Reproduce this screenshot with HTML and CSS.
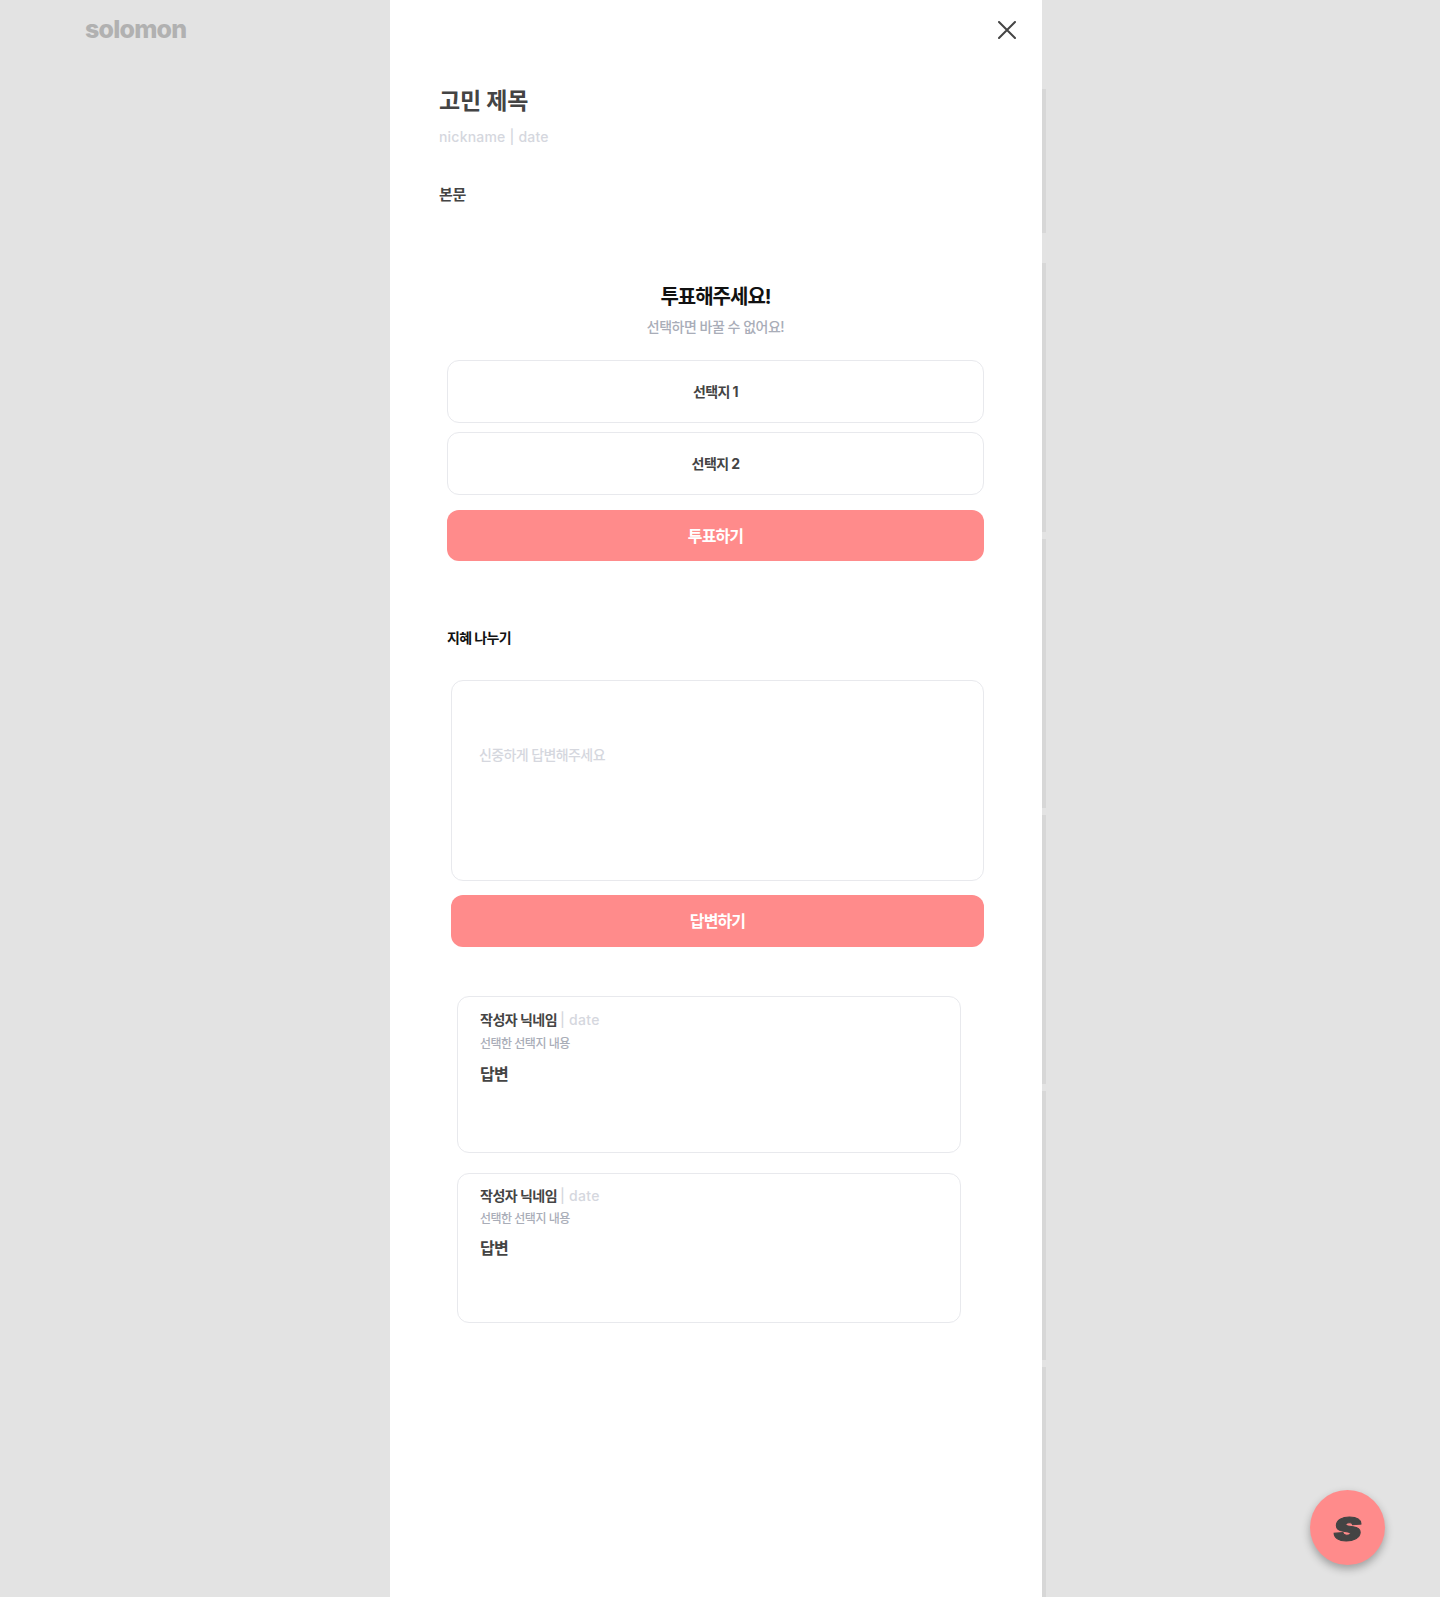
FILE: index.html
```html
<!DOCTYPE html>
<html lang="ko">
<head>
    <meta charset="UTF-8">
    <meta name="viewport" content="width=device-width, initial-scale=1.0">
    <title>Solomon</title>
    <link rel="stylesheet" href="styles.css">
</head>
<body>
    <div class="page">
        <header class="side">
            <span class="logo">solomon</span>
        </header>

        <main class="modal">
            <button class="close" type="button" aria-label="close">
                <svg width="18" height="18" viewBox="0 0 18 18">
                    <path d="M1 1L17 17M17 1L1 17" stroke="#444" stroke-width="2" stroke-linecap="round" fill="none"/>
                </svg>
            </button>

            <section class="post">
                <h1>고민 제목</h1>
                <p class="meta">nickname | date</p>
                <p class="body-text">본문</p>
            </section>

            <section class="vote">
                <h2>투표해주세요!</h2>
                <p class="vote-note">선택하면 바꿀 수 없어요!</p>
                <div class="option">선택지 1</div>
                <div class="option">선택지 2</div>
                <button class="btn" type="button">투표하기</button>
            </section>

            <section class="share">
                <h3>지혜 나누기</h3>
                <div class="answer-form">
                    <div class="answer-input">신중하게 답변해주세요</div>
                    <button class="btn" type="button">답변하기</button>
                </div>
            </section>

            <section class="answers">
                <article class="answer answer-first">
                    <p class="writer">작성자 닉네임 <span>| date</span></p>
                    <p class="picked">선택한 선택지 내용</p>
                    <p class="reply">답변</p>
                </article>
                <article class="answer answer-second">
                    <p class="writer">작성자 닉네임 <span>| date</span></p>
                    <p class="picked">선택한 선택지 내용</p>
                    <p class="reply">답변</p>
                </article>
            </section>
        </main>

        <!-- edges of the cards behind the modal -->
        <div class="edges">
            <div class="edge edge-short"></div>
            <div class="edge"></div>
            <div class="edge"></div>
            <div class="edge"></div>
            <div class="edge"></div>
            <div class="edge edge-last"></div>
        </div>
    </div>

    <button class="fab" type="button" aria-label="solomon"><span>s</span></button>
</body>
</html>
```

FILE: styles.css
```css
* {
    margin: 0;
    padding: 0;
    box-sizing: border-box;
    font-family: 'Inter', 'Noto Sans CJK KR', sans-serif;
}
body {
    height: 1597px;
    overflow: hidden;
    background: #e3e3e3;
}
button {
    border: none;
    background: none;
    cursor: pointer;
}
.page {
    display: grid;
    grid-template-columns: 390px 652px 1fr;
    height: 1597px;
}
.side {
    padding: 13px 0 0 85px;
}
.logo {
    display: block;
    font-size: 25px;
    line-height: 32px;
    font-weight: 800;
    letter-spacing: -0.8px;
    color: #b1b1b1;
}
.modal {
    position: relative;
    background: #fff;
    padding: 0 58px 0 49px;
}
.close {
    position: absolute;
    top: 21px;
    left: 608px;
    display: flex;
}
.post {
    padding-top: 85px;
}
.post h1 {
    font-size: 23px;
    line-height: 32px;
    font-weight: 700;
    letter-spacing: -0.2px;
    color: #444;
}
.meta {
    margin-top: 10px;
    font-size: 14px;
    line-height: 20px;
    font-weight: 500;
    letter-spacing: 0.2px;
    color: #d5d7de;
}
.body-text {
    margin-top: 38px;
    font-size: 15px;
    line-height: 20px;
    font-weight: 700;
    letter-spacing: -0.3px;
    color: #444;
}
.vote {
    margin: 78px 0 0 8px;
    text-align: center;
}
.vote h2 {
    font-size: 20px;
    line-height: 28px;
    font-weight: 700;
    letter-spacing: -1px;
    color: #111;
}
.vote-note {
    margin-top: 6px;
    font-size: 14px;
    line-height: 20px;
    font-weight: 500;
    letter-spacing: -0.5px;
    color: #a9adb8;
}
.option {
    height: 63px;
    line-height: 61px;
    margin-top: 9px;
    border: 1px solid #e8e9ed;
    border-radius: 12px;
    font-size: 14px;
    font-weight: 700;
    letter-spacing: -0.6px;
    color: #444;
}
.vote-note + .option {
    margin-top: 23px;
}
.btn {
    display: block;
    width: 100%;
    height: 51px;
    padding-bottom: 2px;
    border-radius: 12px;
    background: #ff8b8b;
    color: #fff;
    font-size: 16px;
    font-weight: 700;
    letter-spacing: -0.9px;
}
.vote .btn {
    margin-top: 15px;
}
.share {
    margin: 67px 0 0 8px;
}
.share h3 {
    font-size: 14px;
    line-height: 20px;
    font-weight: 700;
    letter-spacing: -0.6px;
    color: #111;
}
.answer-form {
    margin: 32px 0 0 4px;
}
.answer-input {
    height: 201px;
    padding: 64px 0 0 27px;
    border: 1px solid #e8e9ed;
    border-radius: 12px;
    font-size: 14px;
    line-height: 20px;
    font-weight: 500;
    letter-spacing: -0.6px;
    color: #d5d7de;
}
.answer-form .btn {
    height: 52px;
    margin-top: 14px;
}
.answers {
    margin: 49px 23px 0 18px;
}
.answer {
    padding: 13px 22px 0;
    border: 1px solid #e8e9ed;
    border-radius: 12px;
}
.answer-first {
    height: 157px;
}
.answer-second {
    height: 150px;
    margin-top: 20px;
    padding-top: 12px;
}
.writer {
    font-size: 14px;
    line-height: 20px;
    font-weight: 700;
    letter-spacing: -0.5px;
    color: #444;
}
.writer span {
    font-weight: 500;
    color: #d5d7de;
    letter-spacing: 0.3px;
}
.picked {
    margin-top: 5px;
    font-size: 12px;
    line-height: 18px;
    font-weight: 500;
    letter-spacing: -0.5px;
    color: #a9adb8;
}
.reply {
    margin-top: 10px;
    font-size: 16px;
    line-height: 22px;
    font-weight: 700;
    letter-spacing: -0.8px;
    color: #444;
}
.answer-second .picked {
    margin-top: 4px;
}
.answer-second .reply {
    margin-top: 9px;
}
.edges {
    display: flex;
    flex-direction: column;
    gap: 7px;
    padding-top: 89px;
    height: 1597px;
}
.edge {
    width: 4px;
    height: 269px;
    background: #d7d7d7;
}
.edge-short {
    height: 144px;
    margin-bottom: 23px;
}
.edge-last {
    flex: 1;
}
.fab {
    position: fixed;
    left: 1310px;
    top: 1490px;
    width: 75px;
    height: 75px;
    display: flex;
    align-items: center;
    justify-content: center;
    border-radius: 50%;
    background: #ff8b8b;
    box-shadow: 0 4px 8px rgba(0, 0, 0, 0.3);
}
.fab span {
    font-size: 44px;
    line-height: 46px;
    font-weight: 900;
    font-style: italic;
    -webkit-text-stroke: 1px #444;
    color: #444;
    margin-top: -6px;
    transform: scaleX(1.1);
}
```
